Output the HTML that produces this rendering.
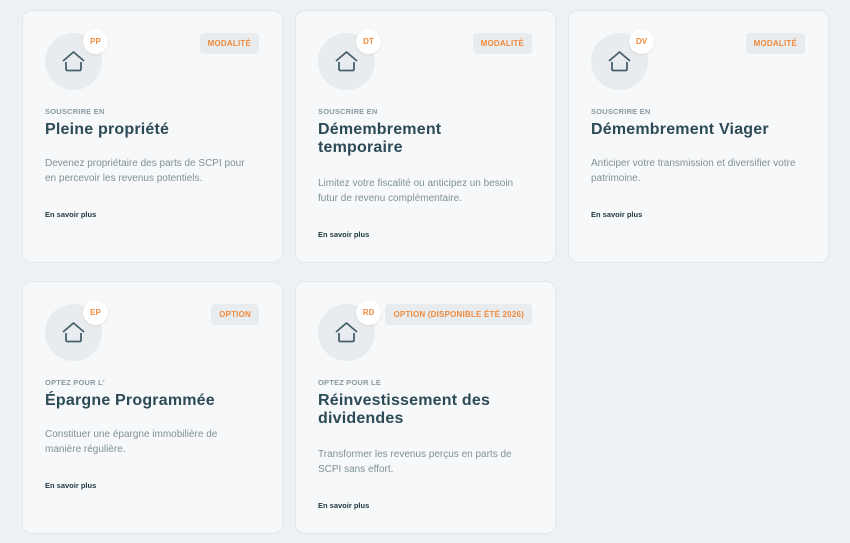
<!DOCTYPE html>
<html><head><meta charset="utf-8"><style>
*{box-sizing:border-box;margin:0;padding:0}
body{width:850px;height:543px;background:#eef1f3;font-family:"Liberation Sans",sans-serif;position:relative;overflow:hidden}
.card{position:absolute;width:261px;height:253px;background:#f6f8f9;border:1px solid #e2e7ea;border-radius:10px}
.ic{position:absolute;left:22px;top:22px;width:57px;height:57px;border-radius:50%;background:#e8ecee}
.ic svg{position:absolute;left:16px;top:16px}
.bd{position:absolute;left:38px;top:-4px;width:25px;height:25px;border-radius:50%;background:#fff;color:#f08a3c;font-size:8px;font-weight:bold;text-align:center;line-height:25px;box-shadow:0 1px 3px rgba(0,0,0,.08)}
.tag{position:absolute;right:23px;top:22px;height:21px;padding:0 8px;background:#e8ecee;border-radius:4px;color:#f08a3c;font-size:8px;font-weight:bold;line-height:21px;letter-spacing:.2px}
.lb{position:absolute;left:22px;top:96px;font-size:7.5px;color:#8a9aa1;font-weight:bold;letter-spacing:.2px}
.tt{position:absolute;left:22px;top:110px;font-size:16px;font-weight:bold;color:#2d4b56;line-height:18px;width:195px;letter-spacing:.2px}
.ds{font-size:10px;color:#7f9199;line-height:15px;width:205px}
.mr{font-size:7.5px;font-weight:bold;color:#1e3640;margin-top:24px}
.bt{position:absolute;left:22px}
</style></head><body>
<div class="card" style="left:22px;top:10px">
<div class="ic"><svg width="25" height="25" viewBox="0 0 25 25" fill="none" stroke="#46606a" stroke-width="1.8" stroke-linejoin="round"><path d="M2 12 L12.5 3 L23 12 M5 13 V20 Q5 21.5 6.5 21.5 H18.5 Q20 21.5 20 20 V13"/></svg><div class="bd">PP</div></div>
<div class="tag">MODALITÉ</div><div class="lb">SOUSCRIRE EN</div><div class="tt">Pleine propriété</div>
<div class="bt" style="top:145px"><div class="ds">Devenez propriétaire des parts de SCPI pour en percevoir les revenus potentiels.</div><div class="mr">En savoir plus</div></div></div>
<div class="card" style="left:295px;top:10px">
<div class="ic"><svg width="25" height="25" viewBox="0 0 25 25" fill="none" stroke="#46606a" stroke-width="1.8" stroke-linejoin="round"><path d="M2 12 L12.5 3 L23 12 M5 13 V20 Q5 21.5 6.5 21.5 H18.5 Q20 21.5 20 20 V13"/></svg><div class="bd">DT</div></div>
<div class="tag">MODALITÉ</div><div class="lb">SOUSCRIRE EN</div><div class="tt">Démembrement temporaire</div>
<div class="bt" style="top:165px"><div class="ds">Limitez votre fiscalité ou anticipez un besoin futur de revenu complémentaire.</div><div class="mr">En savoir plus</div></div></div>
<div class="card" style="left:568px;top:10px">
<div class="ic"><svg width="25" height="25" viewBox="0 0 25 25" fill="none" stroke="#46606a" stroke-width="1.8" stroke-linejoin="round"><path d="M2 12 L12.5 3 L23 12 M5 13 V20 Q5 21.5 6.5 21.5 H18.5 Q20 21.5 20 20 V13"/></svg><div class="bd">DV</div></div>
<div class="tag">MODALITÉ</div><div class="lb">SOUSCRIRE EN</div><div class="tt" style="width:230px">Démembrement Viager</div>
<div class="bt" style="top:145px"><div class="ds">Anticiper votre transmission et diversifier votre patrimoine.</div><div class="mr">En savoir plus</div></div></div>
<div class="card" style="left:22px;top:281px">
<div class="ic"><svg width="25" height="25" viewBox="0 0 25 25" fill="none" stroke="#46606a" stroke-width="1.8" stroke-linejoin="round"><path d="M2 12 L12.5 3 L23 12 M5 13 V20 Q5 21.5 6.5 21.5 H18.5 Q20 21.5 20 20 V13"/></svg><div class="bd">EP</div></div>
<div class="tag">OPTION</div><div class="lb">OPTEZ POUR L'</div><div class="tt" style="width:230px">Épargne Programmée</div>
<div class="bt" style="top:145px"><div class="ds">Constituer une épargne immobilière de manière régulière.</div><div class="mr">En savoir plus</div></div></div>
<div class="card" style="left:295px;top:281px">
<div class="ic"><svg width="25" height="25" viewBox="0 0 25 25" fill="none" stroke="#46606a" stroke-width="1.8" stroke-linejoin="round"><path d="M2 12 L12.5 3 L23 12 M5 13 V20 Q5 21.5 6.5 21.5 H18.5 Q20 21.5 20 20 V13"/></svg><div class="bd">RD</div></div>
<div class="tag">OPTION (DISPONIBLE ÉTÉ 2026)</div><div class="lb">OPTEZ POUR LE</div><div class="tt">Réinvestissement des dividendes</div>
<div class="bt" style="top:165px"><div class="ds">Transformer les revenus perçus en parts de SCPI sans effort.</div><div class="mr">En savoir plus</div></div></div>
</body></html>
